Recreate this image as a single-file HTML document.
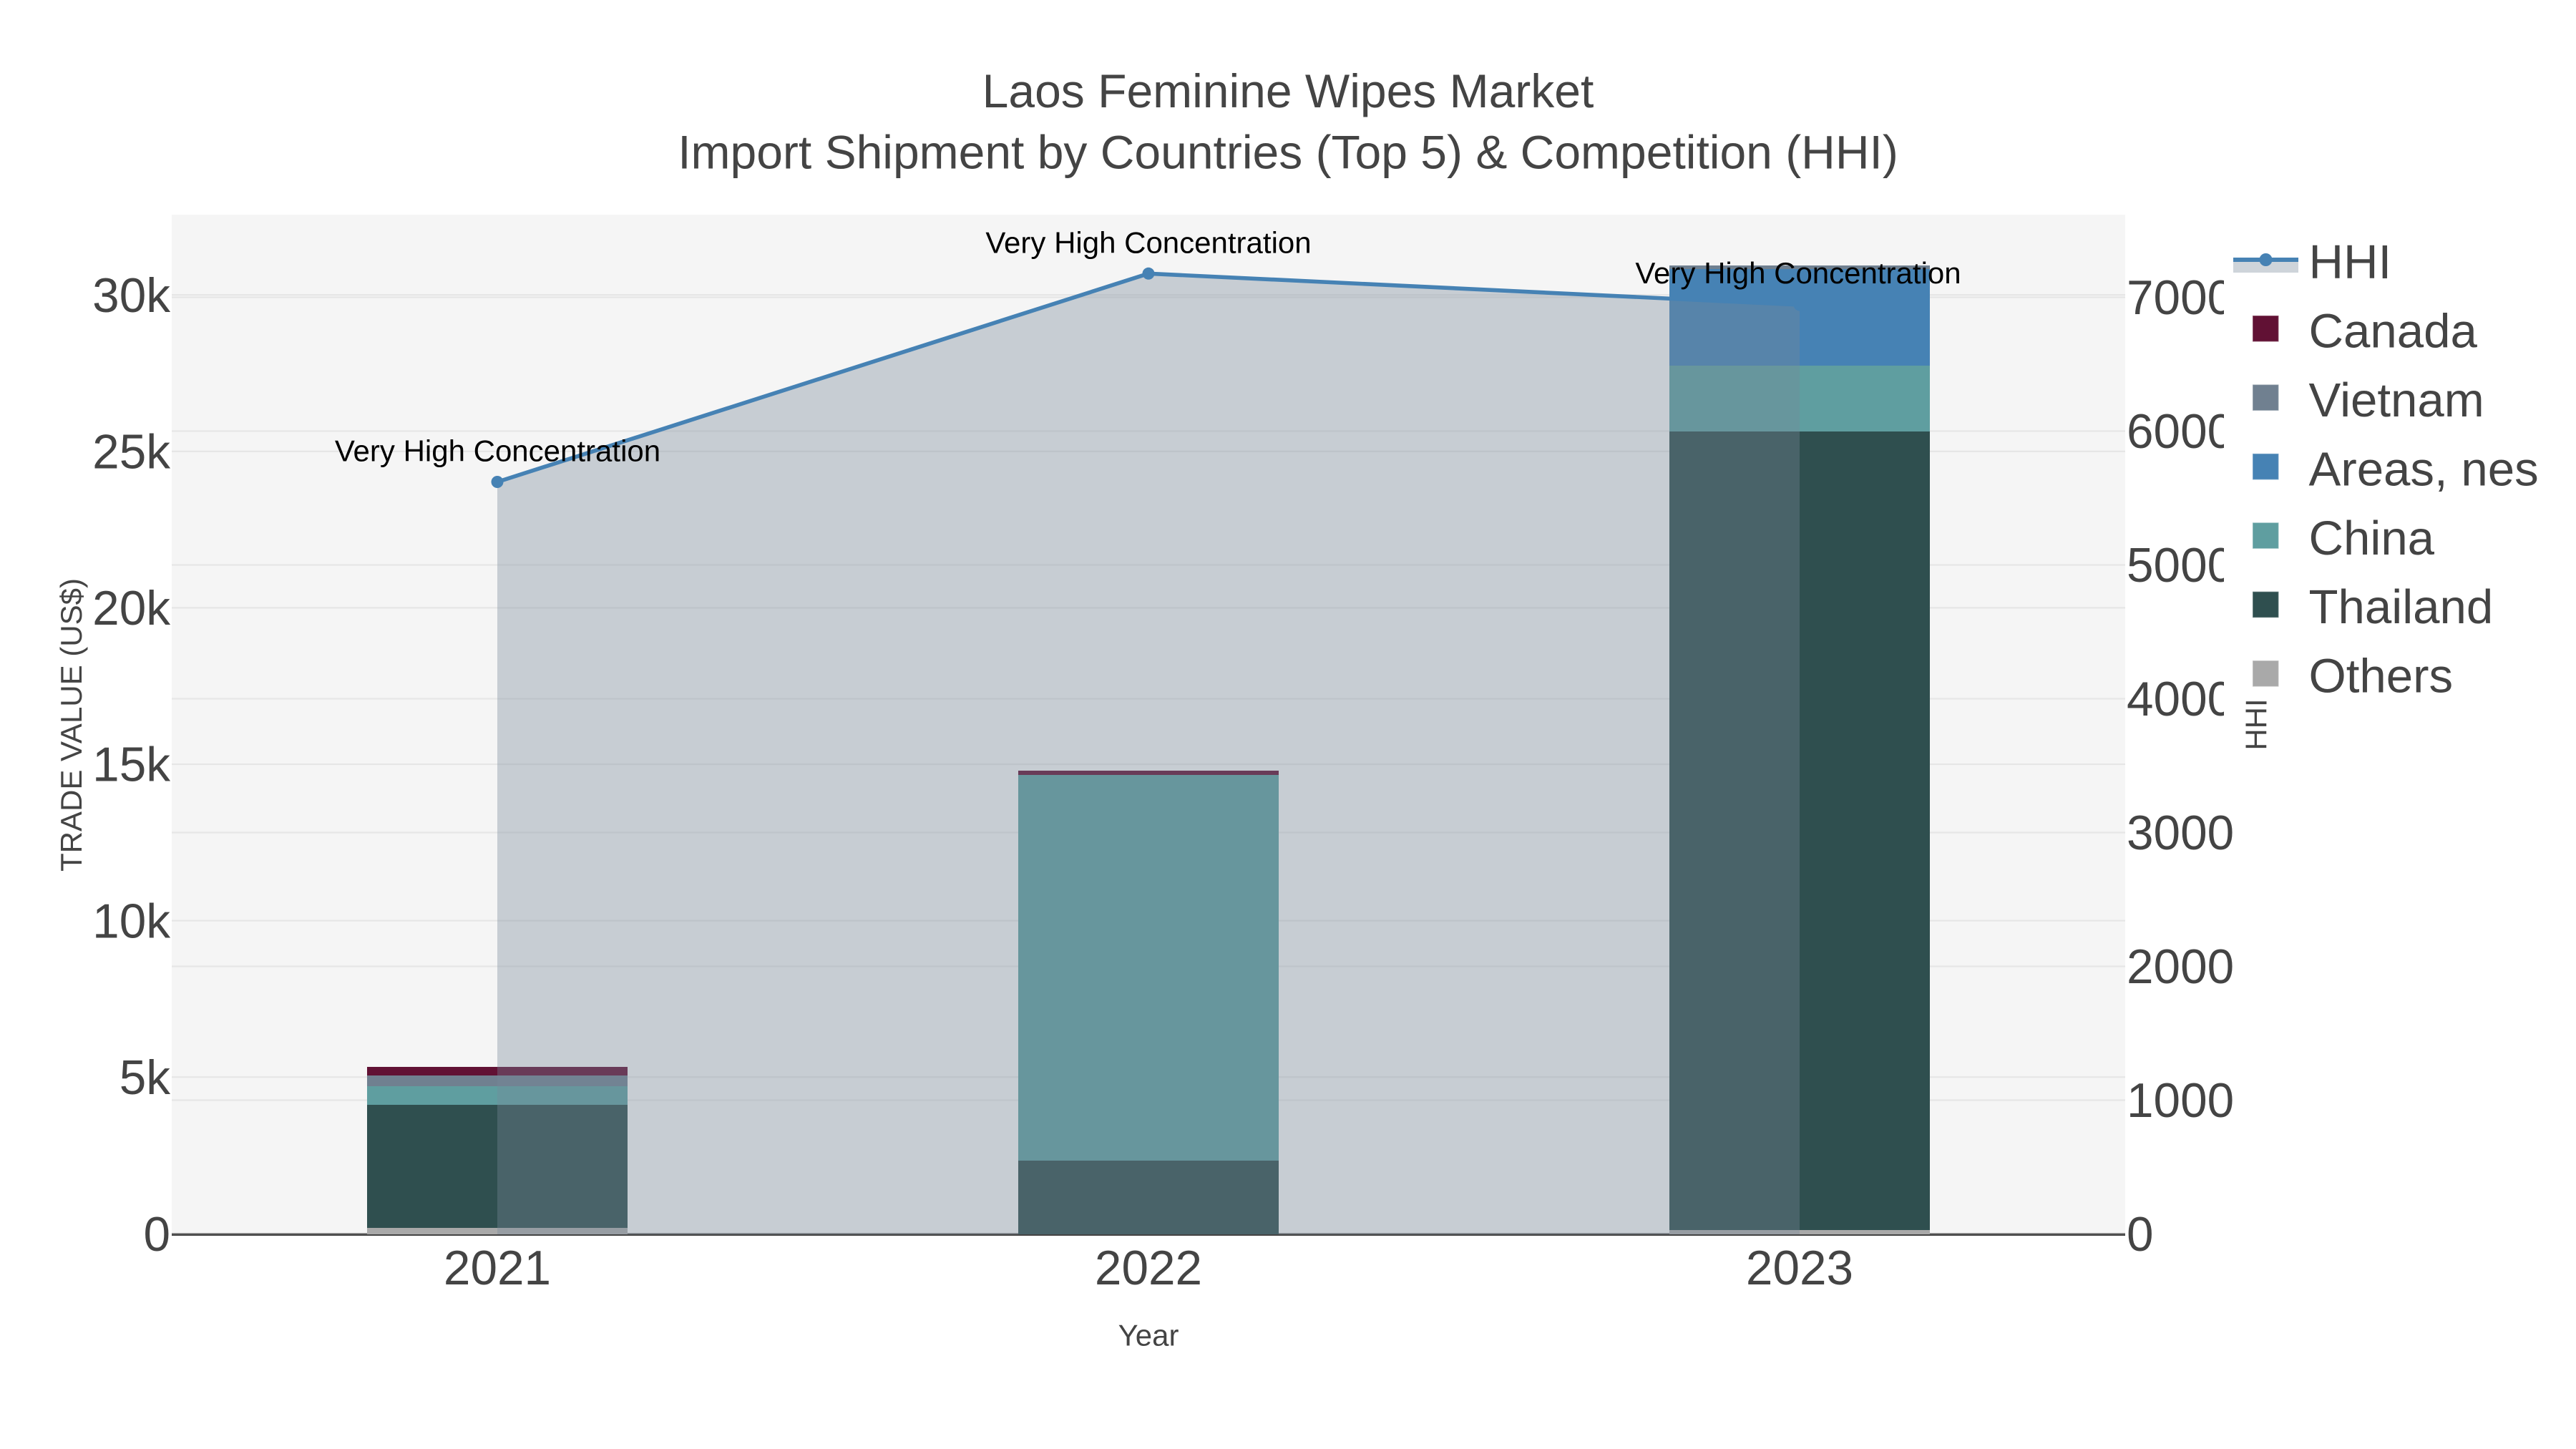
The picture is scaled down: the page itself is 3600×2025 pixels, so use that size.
<!DOCTYPE html>
<html lang="en">
<head>
<meta charset="utf-8">
<title>Laos Feminine Wipes Market</title>
<style>
html,body{margin:0;padding:0;background:#fff;width:3600px;height:2025px;overflow:hidden}
svg{display:block}
text{font-family:"Liberation Sans",Arial,sans-serif;fill:#444}
.t{font-size:66px;text-anchor:middle}
.l{font-size:67.5px;text-anchor:end}
.r{font-size:67.5px;text-anchor:start}
.x{font-size:67.5px;text-anchor:middle}
.a{font-size:42px;text-anchor:middle;fill:#000}
.at{font-size:42px;text-anchor:middle}
.lg{font-size:67.2px}
</style>
</head>
<body>
<svg width="3600" height="2025" viewBox="0 0 3600 2025" xmlns="http://www.w3.org/2000/svg">
<rect width="3600" height="2025" fill="#fff"/>
<rect x="240" y="300" width="2730" height="1425" fill="#f5f5f5"/>

<!-- grid -->
<g fill="#e6e6e6">
<rect x="240" y="411" width="2730" height="2.25"/>
<rect x="240" y="629.7" width="2730" height="2.25"/>
<rect x="240" y="848.3" width="2730" height="2.25"/>
<rect x="240" y="1066.9" width="2730" height="2.25"/>
<rect x="240" y="1285.5" width="2730" height="2.25"/>
<rect x="240" y="1504.1" width="2730" height="2.25"/>
<rect x="240" y="414.4" width="2730" height="2.25"/>
<rect x="240" y="601.4" width="2730" height="2.25"/>
<rect x="240" y="788.4" width="2730" height="2.25"/>
<rect x="240" y="975.4" width="2730" height="2.25"/>
<rect x="240" y="1162.4" width="2730" height="2.25"/>
<rect x="240" y="1349.4" width="2730" height="2.25"/>
<rect x="240" y="1536.4" width="2730" height="2.25"/>
</g>
<rect x="240" y="1723.4" width="2730" height="2.2" fill="#666"/>

<!-- bars 2021 -->
<rect x="513" y="1491" width="364" height="12" fill="#611134"/>
<rect x="513" y="1503" width="364" height="15" fill="#708090"/>
<rect x="513" y="1518" width="364" height="26" fill="#5f9ea0"/>
<rect x="513" y="1544" width="364" height="172" fill="#2f4f4f"/>
<rect x="513" y="1716" width="364" height="9" fill="#a9a9a9"/>
<!-- bars 2022 -->
<rect x="1423" y="1077" width="364" height="6" fill="#611134"/>
<rect x="1423" y="1083" width="364" height="539" fill="#5f9ea0"/>
<rect x="1423" y="1622" width="364" height="103" fill="#2f4f4f"/>
<!-- bars 2023 -->
<rect x="2333" y="371" width="364" height="5" fill="#708090"/>
<rect x="2333" y="376" width="364" height="135" fill="#4682b4"/>
<rect x="2333" y="511" width="364" height="92" fill="#5f9ea0"/>
<rect x="2333" y="603" width="364" height="1116" fill="#2f4f4f"/>
<rect x="2333" y="1719" width="364" height="6" fill="#a9a9a9"/>

<!-- axis bottom -->
<rect x="240" y="1725" width="2730" height="2" fill="#444"/>

<!-- HHI area & line -->
<polygon points="695,673.5 1605,382.3 2515,426 2515,1725 695,1725" fill="rgb(119,136,153)" fill-opacity="0.36"/>
<polyline points="695,673.5 1605,382.3 2515,426" fill="none" stroke="#4682b4" stroke-width="5.6" stroke-linejoin="round"/>
<circle cx="695" cy="673.5" r="8.5" fill="#4682b4"/>
<circle cx="1605" cy="382.3" r="8.5" fill="#4682b4"/>
<circle cx="2515" cy="426" r="8.5" fill="#4682b4"/>

<!-- annotations -->
<text class="a" x="695.5" y="644.4">Very High Concentration</text>
<text class="a" x="1605" y="353.3">Very High Concentration</text>
<text class="a" x="2513" y="396">Very High Concentration</text>

<!-- title -->
<text class="t" x="1800" y="150">Laos Feminine Wipes Market</text>
<text class="t" x="1800" y="235.7">Import Shipment by Countries (Top 5) &amp; Competition (HHI)</text>

<!-- left ticks -->
<text class="l" x="238" y="436">30k</text>
<text class="l" x="238" y="654.5">25k</text>
<text class="l" x="238" y="873">20k</text>
<text class="l" x="238" y="1091.5">15k</text>
<text class="l" x="238" y="1310.5">10k</text>
<text class="l" x="238" y="1529">5k</text>
<text class="l" x="238" y="1748">0</text>

<!-- right ticks -->
<text class="r" x="2972" y="439">7000</text>
<text class="r" x="2972" y="626">6000</text>
<text class="r" x="2972" y="813">5000</text>
<text class="r" x="2972" y="1000">4000</text>
<text class="r" x="2972" y="1187">3000</text>
<text class="r" x="2972" y="1374">2000</text>
<text class="r" x="2972" y="1561">1000</text>
<text class="r" x="2972" y="1748">0</text>

<!-- x ticks -->
<text class="x" x="695" y="1795">2021</text>
<text class="x" x="1605" y="1795">2022</text>
<text class="x" x="2515" y="1795">2023</text>

<!-- legend -->
<rect x="3108" y="310" width="492" height="700" fill="#fff"/>
<rect x="3121" y="363" width="91" height="18" fill="rgb(119,136,153)" fill-opacity="0.36"/>
<rect x="3121" y="360" width="91" height="6" fill="#4682b4"/>
<circle cx="3166.5" cy="363" r="9" fill="#4682b4"/>
<g stroke-width="1.5" stroke="#fff" stroke-opacity="0.35">
<rect x="3148" y="441" width="36.5" height="36.5" fill="#611134"/>
<rect x="3148" y="537.4" width="36.5" height="36.5" fill="#708090"/>
<rect x="3148" y="633.9" width="36.5" height="36.5" fill="#4682b4"/>
<rect x="3148" y="730.3" width="36.5" height="36.5" fill="#5f9ea0"/>
<rect x="3148" y="826.7" width="36.5" height="36.5" fill="#2f4f4f"/>
<rect x="3148" y="923.1" width="36.5" height="36.5" fill="#a9a9a9"/>
</g>
<text class="lg" x="3226.5" y="389">HHI</text>
<text class="lg" x="3226.5" y="485.4">Canada</text>
<text class="lg" x="3226.5" y="581.9">Vietnam</text>
<text class="lg" x="3226.5" y="678.3">Areas, nes</text>
<text class="lg" x="3226.5" y="774.8">China</text>
<text class="lg" x="3226.5" y="871.2">Thailand</text>
<text class="lg" x="3226.5" y="967.6">Others</text>

<!-- axis titles -->
<text class="at" x="1605" y="1880.7">Year</text>
<text class="at" transform="translate(114,1013) rotate(-90)">TRADE VALUE (US$)</text>
<text class="at" transform="translate(3167.5,1012.5) rotate(-90)">HHI</text>
</svg>
</body>
</html>
